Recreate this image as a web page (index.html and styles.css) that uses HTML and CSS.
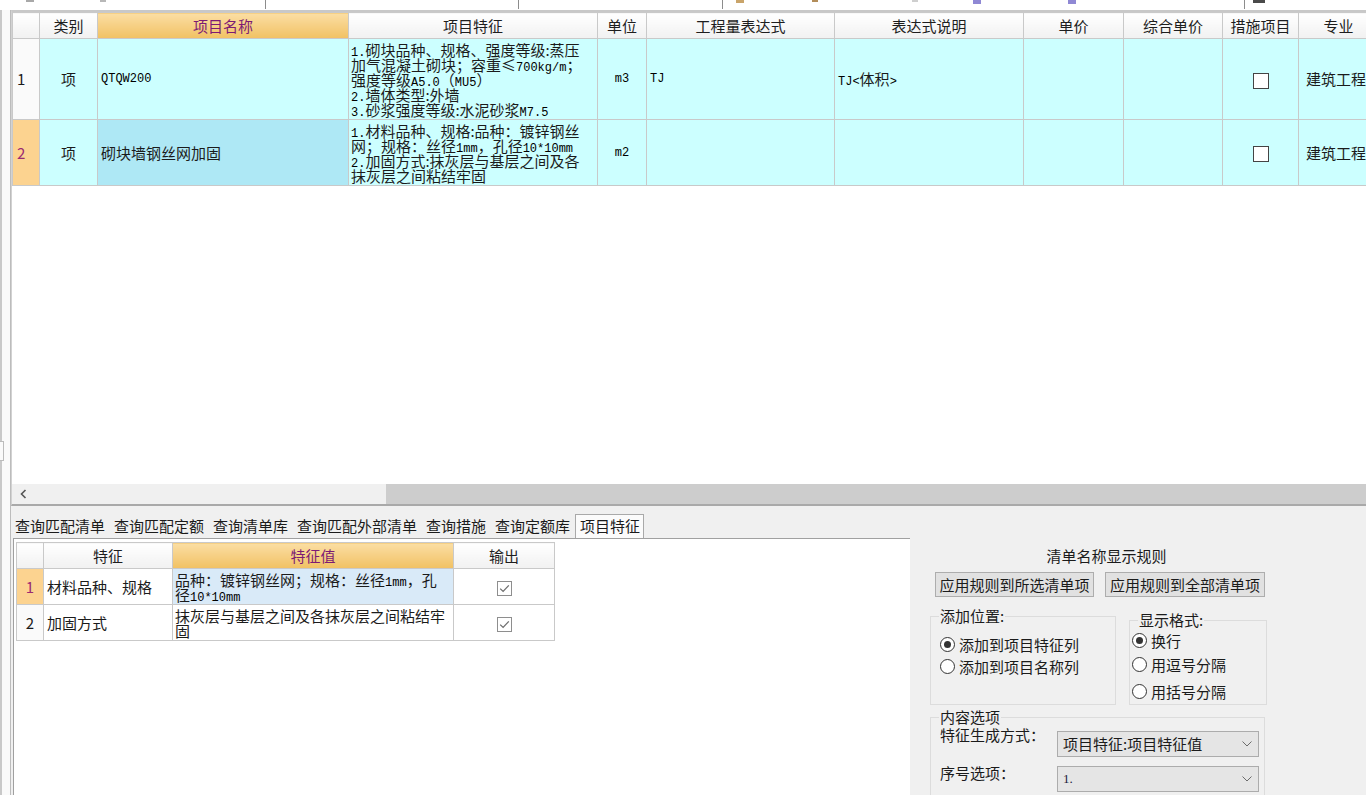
FILE: index.html
```html
<!DOCTYPE html>
<html lang="zh-CN">
<head>
<meta charset="utf-8">
<title>清单编辑</title>
<link rel="stylesheet" href="styles.css">
</head>
<body>
<div class="app">
  <div class="toolbar">
    <span class="tk t1"></span><span class="tk t2"></span>
    <span class="tsep s1"></span><span class="tsep s2"></span><span class="tsep s3"></span>
    <span class="tk t3"></span><span class="tk t4"></span><span class="tk t5"></span>
    <span class="tk t6"></span><span class="tk t7"></span>
    <span class="tsep s4"></span><span class="tk t8"></span>
  </div>
  <div class="main">
    <div class="side"><span class="grip"></span></div>
    <div class="content">
      <div class="grid">
        <div class="grid-body">
          <table class="gt">
            <colgroup>
              <col class="w-rn"><col class="w-type"><col class="w-name"><col class="w-feat"><col class="w-unit"><col class="w-expr"><col class="w-desc"><col class="w-price"><col class="w-cprice"><col class="w-meas"><col class="w-major">
            </colgroup>
            <thead>
              <tr><th></th><th>类别</th><th class="hl">项目名称</th><th>项目特征</th><th>单位</th><th>工程量表达式</th><th>表达式说明</th><th>单价</th><th>综合单价</th><th>措施项目</th><th>专业</th></tr>
            </thead>
            <tbody>
              <tr class="r1">
                <td class="rn">1</td>
                <td class="c">项</td>
                <td class="mono">QTQW200</td>
                <td class="feat"><div class="fbox h81"><span class="m">1.</span>砌块品种、规格、强度等级:蒸压<br>加气混凝土砌块；容重≤<span class="m">700kg/m</span>；<br>强度等级<span class="m">A5.0</span>（<span class="m">MU5</span>）<br><span class="m">2.</span>墙体类型:外墙<br><span class="m">3.</span>砂浆强度等级:水泥砂浆<span class="m">M7.5</span></div></td>
                <td class="c mono">m3</td>
                <td class="mono">TJ</td>
                <td><span class="m">TJ&lt;</span>体积<span class="m">&gt;</span></td>
                <td></td><td></td>
                <td class="c"><span class="cb"></span></td>
                <td class="major">建筑工程</td>
              </tr>
              <tr class="r2">
                <td class="rn sel">2</td>
                <td class="c">项</td>
                <td class="cur">砌块墙钢丝网加固</td>
                <td class="feat"><div class="fbox h66"><span class="m">1.</span>材料品种、规格:品种：镀锌钢丝<br>网；规格：丝径<span class="m">1mm</span>，孔径<span class="m">10*10mm</span><br><span class="m">2.</span>加固方式:抹灰层与基层之间及各<br>抹灰层之间粘结牢固</div></td>
                <td class="c mono">m2</td>
                <td></td><td></td><td></td><td></td>
                <td class="c"><span class="cb"></span></td>
                <td class="major">建筑工程</td>
              </tr>
            </tbody>
          </table>
        </div>
        <div class="hscroll">
          <div class="hs-left">
            <svg class="hs-arrow" width="7" height="10" viewBox="0 0 7 10"><path d="M5.5 1 L1.5 5 L5.5 9" fill="none" stroke="#555" stroke-width="1.6"/></svg>
          </div>
          <div class="hs-thumb"></div>
        </div>
      </div>

      <div class="tabs">
        <span class="tab">查询匹配清单</span>
        <span class="tab">查询匹配定额</span>
        <span class="tab">查询清单库</span>
        <span class="tab">查询匹配外部清单</span>
        <span class="tab">查询措施</span>
        <span class="tab">查询定额库</span>
        <span class="tab active">项目特征</span>
      </div>

      <div class="bottom">
        <div class="fpanel">
          <table class="ft">
            <colgroup><col class="f-rn"><col class="f-name"><col class="f-val"><col class="f-out"></colgroup>
            <thead>
              <tr><th></th><th>特征</th><th class="hl">特征值</th><th>输出</th></tr>
            </thead>
            <tbody>
              <tr>
                <td class="rn sel">1</td>
                <td>材料品种、规格</td>
                <td class="val cur">品种：镀锌钢丝网；规格：丝径<span class="m">1mm</span>，孔<br>径<span class="m">10*10mm</span></td>
                <td class="c"><svg class="chk" width="15" height="15" viewBox="0 0 15 15"><rect x="0.5" y="0.5" width="14" height="14" fill="#fff" stroke="#8e8e8e"/><path d="M3.2 7.6 L6.1 10.4 L11.8 4.4" fill="none" stroke="#6e6e6e" stroke-width="1.3"/></svg></td>
              </tr>
              <tr>
                <td class="rn">2</td>
                <td>加固方式</td>
                <td class="val">抹灰层与基层之间及各抹灰层之间粘结牢<br>固</td>
                <td class="c"><svg class="chk" width="15" height="15" viewBox="0 0 15 15"><rect x="0.5" y="0.5" width="14" height="14" fill="#fff" stroke="#8e8e8e"/><path d="M3.2 7.6 L6.1 10.4 L11.8 4.4" fill="none" stroke="#6e6e6e" stroke-width="1.3"/></svg></td>
              </tr>
            </tbody>
          </table>
        </div>

        <div class="rules">
          <div class="rules-title">清单名称显示规则</div>
          <div class="btn-row">
            <span class="btn b1">应用规则到所选清单项</span>
            <span class="btn b2">应用规则到全部清单项</span>
          </div>
          <div class="fs-row">
            <fieldset class="fs fs1">
              <legend>添加位置:</legend>
              <div class="radio first"><span class="rb on"></span>添加到项目特征列</div>
              <div class="radio"><span class="rb"></span>添加到项目名称列</div>
            </fieldset>
            <fieldset class="fs fs2">
              <legend>显示格式:</legend>
              <div class="radio"><span class="rb on"></span>换行</div>
              <div class="radio"><span class="rb"></span>用逗号分隔</div>
              <div class="radio last"><span class="rb"></span>用括号分隔</div>
            </fieldset>
          </div>
          <fieldset class="fs fs3">
            <legend>内容选项</legend>
            <div class="opt o1">
              <span class="opt-label">特征生成方式：</span>
              <span class="select"><span class="sel-text">项目特征:项目特征值</span><svg class="chev" width="10" height="6" viewBox="0 0 10 6"><path d="M0.5 0.5 L5 5 L9.5 0.5" fill="none" stroke="#6b6b6b" stroke-width="1"/></svg></span>
            </div>
            <div class="opt o2">
              <span class="opt-label">序号选项：</span>
              <span class="select"><span class="sel-text num">1.</span><svg class="chev" width="10" height="6" viewBox="0 0 10 6"><path d="M0.5 0.5 L5 5 L9.5 0.5" fill="none" stroke="#6b6b6b" stroke-width="1"/></svg></span>
            </div>
          </fieldset>
        </div>
      </div>
    </div>
  </div>
</div>
</body>
</html>
```
FILE: styles.css
```css
* { box-sizing: border-box; margin: 0; padding: 0; }
html, body { width: 1366px; height: 795px; overflow: hidden; }
body {
  background: #f0f0f0;
  font-family: "Noto Sans CJK SC", "Microsoft YaHei", sans-serif;
  font-size: 15px;
  color: #1b1b1b;
}
.app { display: flex; flex-direction: column; height: 795px; }

/* toolbar remnant */
.toolbar { height: 10px; flex: none; background: #fff; display: flex; align-items: flex-start; }
.tk { display: block; flex: none; }
.tsep { display: block; flex: none; width: 1px; height: 9px; background: #8c8c8c; }
.t1 { margin-left: 26px; width: 8px; height: 2px; background: #a8a8a8; }
.t2 { margin-left: 66px; width: 6px; height: 2px; background: #b8b8b8; }
.s1 { margin-left: 159px; }
.s2 { margin-left: 252px; }
.s3 { margin-left: 203px; }
.t3 { margin-left: 13px; width: 8px; height: 3px; background: #c9a46a; }
.t4 { margin-left: 68px; width: 6px; height: 2px; background: #b38d5a; }
.t5 { margin-left: 94px; width: 6px; height: 2px; background: #cfcfcf; }
.t6 { margin-left: 55px; width: 8px; height: 4px; background: #8f88d4; }
.t7 { margin-left: 87px; width: 8px; height: 4px; background: #8f88d4; }
.s4 { margin-left: 168px; }
.t8 { margin-left: 8px; width: 12px; height: 3px; background: #4a4a4a; }

.main { flex: 1; display: flex; min-height: 0; }
.side {
  width: 10px; flex: none; background: #fafafa;
  border-left: 2px solid #c9c9c9;
  display: flex; flex-direction: column; justify-content: flex-start;
}
.grip { display: block; margin-top: 431px; margin-left: -2px; width: 4px; height: 20px; background: #fafafa; border: 1px solid #bcbcbc; border-left: none; }
.content { flex: 1; min-width: 0; display: flex; flex-direction: column; border-left: 1px solid #bcbcbc; }

/* main grid */
.grid {
  height: 496px; flex: none; display: flex; flex-direction: column;
  background: #fff;
  border-top: 2px solid #c8c8c8;
  border-left: 1px solid #d2d2d2;
  border-bottom: 2px solid #a9a9a9;
  overflow: hidden;
}
.grid-body { flex: 1; overflow: hidden; min-height: 0; }
.gt { border-collapse: collapse; table-layout: fixed; width: 1366px; }
.w-rn { width: 27px; }
.w-type { width: 58px; }
.w-name { width: 251px; }
.w-feat { width: 249px; }
.w-unit { width: 49px; }
.w-expr { width: 188px; }
.w-desc { width: 189px; }
.w-price { width: 100px; }
.w-cprice { width: 99px; }
.w-meas { width: 76px; }
.w-major { width: 80px; }

.gt th, .gt td, .ft th, .ft td {
  border: 1px solid #c9c9c9;
  white-space: nowrap;
  overflow: hidden;
}
.gt th, .ft th {
  font-weight: normal;
  height: 26px;
  line-height: 20px;
  text-align: center;
  background: linear-gradient(#ffffff, #f1f1f1);
  color: #1e1e1e;
}
.gt th.hl, .ft th.hl {
  background: linear-gradient(#fbdea4, #f1c163);
  color: #7d1b74;
}
.gt td {
  background: #ccffff;
  padding: 0 3px;
  vertical-align: middle;
  text-align: left;
  line-height: 20px;
}
.gt tr.r1 td { height: 81px; }
.gt tr.r2 td { height: 66px; }
.gt td.rn, .ft td.rn { background: #fafafa; padding: 0 0 0 4px; }
.gt td.rn.sel, .ft td.rn.sel { background: #fcd390; color: #9a2a72; }
.gt td.cur { background: #aee8f5; }
.gt td.c, .ft td.c { text-align: center; }
.gt td.mono { font-family: "Liberation Mono", monospace; font-size: 12px; color: #000; }
.m { font-family: "Liberation Mono", monospace; font-size: 12px; line-height: 1px; color: #000; }
.gt td.feat { padding: 0 2px; }
.fbox {
  font-size: 15px; line-height: 15px;
  display: flex; flex-direction: column; justify-content: center;
  overflow: hidden;
}
.fbox.h81 { height: 79px; display: block; padding-top: 2px; }
.fbox.h66 { height: 64px; display: block; padding-top: 2px; }
.gt td.major { padding-left: 7px; }
.cb {
  display: inline-block; width: 16px; height: 16px;
  border: 1px solid #444; background: #fff; vertical-align: middle;
}

.hscroll { height: 20px; flex: none; display: flex; background: #f0f0f0; }
.hs-left { width: 374px; flex: none; display: flex; align-items: center; padding-left: 8px; }
.hs-arrow { display: block; }
.hs-thumb { flex: 1; background: #cdcdcd; }

/* tabs */
.tabs { height: 32px; flex: none; display: flex; align-items: flex-end; background: #f0f0f0; }
.tab {
  height: 24px; line-height: 22px;
  padding: 0 4px 0 3px;
  border: 1px solid transparent; border-bottom: none;
  white-space: nowrap; color: #1b1b1b;
}
.tab.active { border-color: #a9a9a9; background: #fbfbfb; padding: 0 3px 0 4px; }

/* bottom */
.bottom { flex: 1; display: flex; min-height: 0; padding-left: 2px; }
.fpanel {
  width: 897px; flex: none; background: #fff;
  border-left: 1px solid #a0a0a0; border-top: 1px solid #a0a0a0;
  padding: 3px 0 0 2px;
}
.ft { border-collapse: collapse; table-layout: fixed; width: 538px; }
.f-rn { width: 27px; }
.f-name { width: 129px; }
.f-val { width: 281px; }
.f-out { width: 101px; }
.ft th { height: 26px; }
.ft td { height: 36px; background: #fff; padding: 0 3px; vertical-align: middle; line-height: 20px; }
.ft td.rn { text-align: center; padding: 0; background: #fafafa; }
.ft td.val { line-height: 15px; padding: 0 2px; }
.ft td.cur { background: #d9eaf8; }
.chk { display: inline-block; vertical-align: middle; }

/* rules panel */
.rules { flex: 1; margin-left: 2px; padding-left: 18px; }
.rules-title { width: 337px; margin-top: 8px; line-height: 20px; text-align: center; padding-left: 16px; }
.btn-row { display: flex; gap: 11px; margin-top: 6px; margin-left: 5px; }
.btn {
  display: block; height: 25px; line-height: 23px; text-align: center;
  background: #e1e1e1; border: 1px solid #adadad; white-space: nowrap;
}
.b1 { width: 159px; }
.b2 { width: 160px; }

.fs-row { display: flex; align-items: flex-start; gap: 13px; margin-top: 11px; }
.fs { border: 1px solid #dcdcdc; padding: 0 0 0 9px; min-width: 0; }
.fs legend { padding: 0 1px; line-height: 16px; margin-left: -1px; }
.fs1 { width: 186px; height: 97px; }
.fs2 { width: 138px; height: 93px; margin-top: 4px; padding-left: 2px; }
.fs2 legend { margin-left: 6px; }
.radio { display: flex; align-items: center; gap: 4px; height: 22px; white-space: nowrap; }
.fs1 .radio.first { margin-top: 9px; }
.fs2 .radio { height: 24px; }
.fs2 .radio.last { margin-top: 3px; }
.rb {
  display: block; flex: none; width: 15px; height: 15px; border-radius: 50%;
  border: 1px solid #333; background: #fff; position: relative;
}
.rb.on::after {
  content: ""; position: absolute; left: 3px; top: 3px;
  width: 7px; height: 7px; border-radius: 50%; background: #333;
}

.fs3 { width: 335px; height: 100px; margin-top: 4px; border-bottom: none; }
.opt { display: flex; align-items: flex-start; }
.o2 { margin-top: 6px; }
.opt-label { width: 117px; flex: none; line-height: 20px; white-space: nowrap; }
.select {
  display: flex; align-items: center; justify-content: space-between;
  width: 202px; height: 26px; margin-top: 6px;
  background: #e5e5e5; border: 1px solid #acacac;
  padding: 0 6px 0 5px;
}
.o2 .select { margin-top: 3px; }
.sel-text { line-height: 24px; white-space: nowrap; }
.sel-text.num { font-family: "Liberation Serif", serif; font-size: 13px; color: #1c1c3c; }
.chev { display: block; }
```
